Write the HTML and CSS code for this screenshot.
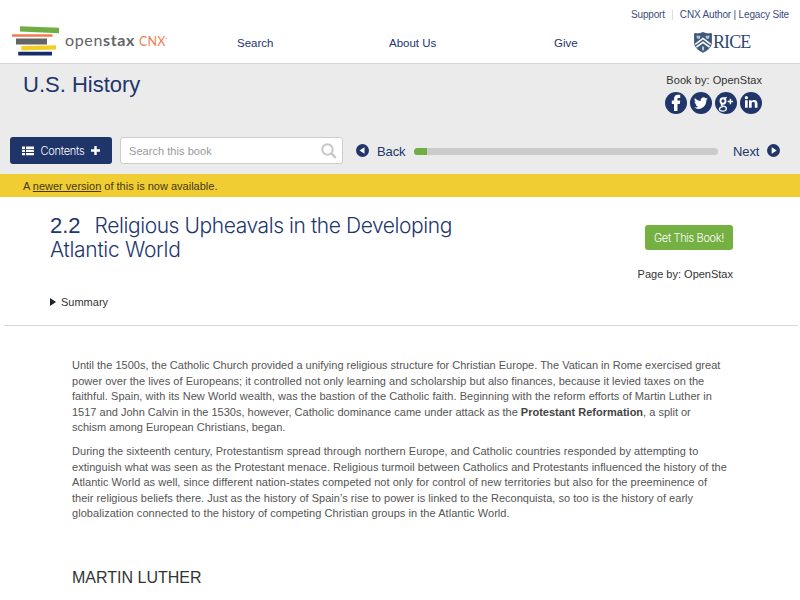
FILE: index.html
```html
<!DOCTYPE html>
<html lang="en">
<head>
<meta charset="utf-8">
<title>U.S. History - OpenStax CNX</title>
<link rel="stylesheet" href="styles.css">
</head>
<body>
<header class="site-header">
  <div class="utility"><a class="support">Support</a><i class="divider"></i><a class="author">CNX Author | Legacy Site</a></div>
  <div class="main-nav">
    <div class="logo">
      <svg width="48" height="31" viewBox="0 0 48 31"><path fill="#70ae43" d="M8 .3 47 1.800v5.500L8 5.500z"/><path fill="#ee7d51" d="M0 8.300h40.500v2.500H0z"/><path fill="#626466" d="M4 12.500h31v6H4z"/><path fill="#f3cf25" d="M9.300 20 44 19.300v4.200L9.300 24.500z"/><path fill="#162b69" d="M6.200 25.700H40v3.700H6.200z"/></svg>
      <span class="word">open<b>stax</b></span><span class="cnx">CNX<sup>·</sup></span>
    </div>
    <a class="nav-search">Search</a><a class="nav-about">About Us</a><a class="nav-give">Give</a>
    <div class="rice">
      <svg width="18" height="21" viewBox="0 0 18 21"><path fill="#3f5b7e" stroke="#2a4468" stroke-width=".8" d="M.6 1.600Q5 2.500 9 .6q4 1.900 8.400 1v8.500c0 5-3.400 8-8.400 10.200C4 18.100.6 15.100.6 10.100z"/><path fill="#b9c8d8" d="m2.500 3.500 4 .5-1 3-2.500-.5zm9 .5 4-.5-.5 3-2.500.5zM8 14.500h2v3.500L9 18.800l-1-.8z"/><path fill="none" stroke="#fff" stroke-width="1.500" d="M1.300 12.300 9 6.500l7.700 5.800M2.400 15.200 9 10.300l6.600 4.900"/></svg>
      <span>RICE</span>
    </div>
  </div>
</header>
<section class="book-bar">
  <div class="book-head">
    <h1>U.S. History</h1>
    <div class="byline">
      <div class="book-by">Book by: OpenStax</div>
      <div class="social">
        <svg viewBox="0 0 22 22"><circle cx="11" cy="11" r="11"/><path class="ink" d="M9 19v-7H6.800V8.600H9V7c0-2.700 1.500-4.200 4-4.200h2.200v3.300h-1.400c-1.100 0-1.300.5-1.300 1.300v1.200h2.700l-.4 3.400h-2.300v7z"/></svg>
        <svg viewBox="0 0 22 22"><circle cx="11" cy="11" r="11"/><path class="ink" d="M17.800 6.600c-.5.300-1 .4-1.600.5.600-.4 1-.9 1.200-1.500-.5.300-1.100.5-1.800.7A2.850 2.850 0 0 0 10.700 9C8.400 8.900 6.300 7.800 4.900 6.100c-.8 1.300-.4 2.900.9 3.800-.5 0-.9-.1-1.300-.3 0 1.400.9 2.500 2.300 2.800-.4.100-.9.100-1.300 0 .4 1.200 1.400 1.900 2.700 2-1.200.9-2.700 1.300-4.200 1.200 5.500 3.400 12.400-.1 12.400-7.500.5-.4 1-.9 1.400-1.500z"/></svg>
        <svg viewBox="0 0 22 22"><circle cx="11" cy="11" r="11"/><g fill="none" stroke="#fff"><ellipse cx="8" cy="9" rx="2.500" ry="2.700" stroke-width="1.900"/><path stroke-width="1.300" d="M9 6.200q1.500-.1 2.700-1M7.500 11.900c-2 1.100-1.300 1.700 1 2.200 4.200.9 3.600 5.100-.8 5-4.500-.1-4.200-3.600.1-4.400"/><path stroke-width="1.500" d="M12.700 9.500h5.400M15.400 6.800v5.400"/></g></svg>
        <svg viewBox="0 0 22 22"><circle cx="11" cy="11" r="11"/><path class="ink" d="M5 8.200h2.700v7.500H5zM9 8.200h2.600v1c1.500-2 5.900-1.600 5.900 2.300v4.200h-2.700v-4.200c0-2-3.100-1.800-3.100 0v4.200H9z"/><circle class="ink" cx="6.350" cy="5.700" r="1.600"/></svg>
      </div>
    </div>
  </div>
  <div class="toolbar">
    <button class="contents"><svg width="12" height="10" viewBox="0 0 12 10"><path fill="#fff" d="M0 .5h3v2.400H0zm4 0h8v2.400H4zM0 3.700h3v2.400H0zm4 0h8v2.400H4zM0 6.900h3v2.400H0zm4 0h8v2.400H4z"/></svg><span>Contents</span><svg width="9" height="9" viewBox="0 0 9 9"><path fill="#fff" d="M3.300 0h2.400v3.300H9v2.400H5.700V9H3.300V5.700H0V3.300h3.300z"/></svg></button>
    <div class="search"><span>Search this book</span><svg width="16" height="16" viewBox="0 0 16 16"><g fill="none" stroke="#c7c7c7" stroke-width="2"><circle cx="6.500" cy="6.500" r="5.200"/><path stroke-width="2.400" d="m10.500 10.500 4.300 4.300"/></g></svg></div>
    <a class="back"><svg width="13" height="13" viewBox="0 0 13 13"><circle cx="6.500" cy="6.500" r="6.500"/><path class="ink" d="M8.500 3.300v6.400L3.500 6.500z"/></svg><span>Back</span></a>
    <div class="progress"><i></i></div>
    <a class="next"><span>Next</span><svg width="13" height="13" viewBox="0 0 13 13"><circle cx="6.500" cy="6.500" r="6.500"/><path class="ink" d="M4.700 3.300v6.400l5-3.200z"/></svg></a>
  </div>
</section>
<div class="notice"><span>A <u>newer version</u> of this is now available.</span></div>
<main>
  <section class="page-head">
    <div class="title-block">
      <h2><span class="num">2.2</span><span class="t1">Religious Upheavals in the Developing</span><br><span class="t2">Atlantic World</span></h2>
      <div class="summary"><svg width="6" height="8" viewBox="0 0 6 8"><path fill="#222" d="M0 0v8l6-4z"/></svg><span>Summary</span></div>
    </div>
    <div class="page-side"><button class="get">Get This Book!</button><div class="page-by">Page by: OpenStax</div></div>
  </section>
  <article>
    <p>Until the 1500s, the Catholic Church provided a unifying religious structure for Christian Europe. The Vatican in Rome exercised great<br><span class="loose">power over the lives of Europeans; it controlled not only learning and scholarship but also finances, because it levied taxes on the</span><br><span class="looser">faithful. Spain, with its New World wealth, was the bastion of the Catholic faith. Beginning with the reform efforts of Martin Luther in</span><br>1517 and John Calvin in the 1530s, however, Catholic dominance came under attack as the <b>Protestant Reformation</b>, a split or<br>schism among European Christians, began.</p>
    <p><span class="looser">During the sixteenth century, Protestantism spread through northern Europe, and Catholic countries responded by attempting to</span><br><span class="loose">extinguish what was seen as the Protestant menace. Religious turmoil between Catholics and Protestants influenced the history of the</span><br><span class="looser">Atlantic World as well, since different nation-states competed not only for control of new territories but also for the preeminence of</span><br><span class="loose">their religious beliefs there. Just as the history of Spain’s rise to power is linked to the Reconquista, so too is the history of early</span><br><span class="looser">globalization connected to the history of competing Christian groups in the Atlantic World.</span></p>
    <h3>MARTIN LUTHER</h3>
  </article>
</main>
</body>
</html>
```
FILE: styles.css
```css
* { box-sizing: border-box; }
body { margin: 0; width: 800px; height: 600px; overflow: hidden; background: #fff; color: #333; font: 11px/16px "Liberation Sans", Arial, sans-serif; }
h1, h2, h3, p { margin: 0; font-weight: 400; }
button { border: 0; padding: 0; font: inherit; color: #fff; }
svg { display: block; flex: none; }
a, h1, h2 { color: #22366c; }
.ink { fill: #fff; }
span, a { white-space: nowrap; }

.site-header { height: 64px; border-bottom: 1px solid #d4d4d4; }
.utility { display: flex; height: 24px; padding: 6px 11px 0 0; justify-content: flex-end; align-items: center; font-size: 10px; letter-spacing: -.17px; }
.utility a { color: #3c4d7c; }
.divider { width: 1px; height: 10px; margin: 0 7px; background: #ddd; }
.main-nav { display: grid; grid-template-columns: 237px 152px 165px 140px 1fr; height: 38px; align-items: center; font-size: 11.5px; }
.main-nav a { margin-bottom: 2px; }
.logo { display: flex; align-items: center; padding-left: 12px; height: 34px; margin-bottom: 5px; font-family: Lato, sans-serif; font-size: 16px; color: #626466; }
.logo .word { margin: 0 0 2px 5px; letter-spacing: .65px; }
.logo .cnx { margin-left: 4px; padding-top: 1px; font-size: 12.5px; letter-spacing: .1px; color: #ee7d51; }
.logo sup { font-size: 7px; line-height: 0; }
.rice { display: flex; align-items: center; gap: 1px; margin-bottom: 2px; font: 18px/21px "Liberation Serif", serif; color: #31486f; letter-spacing: -.9px; }

.book-bar { height: 110px; background: #ebebeb; }
.book-head { display: flex; height: 73px; padding: 8px 38px 0 23px; justify-content: space-between; }
h1 { font-size: 22px; line-height: 26px; }
.byline { text-align: right; }
.book-by { line-height: 17px; font-size: 11px; letter-spacing: .05px; }
.social { display: flex; gap: 3px; margin-top: 3px; justify-content: flex-end; }
.social svg { width: 22px; height: 22px; fill: #203569; }
.toolbar { display: flex; height: 27px; padding-left: 10px; align-items: center; }
.contents { display: flex; width: 102px; height: 27px; padding: 0 12px; align-items: center; justify-content: space-between; background: #1f3469; border-radius: 3px; font: 300 11px/16px Inter, sans-serif; letter-spacing: -.25px; }
.search { display: flex; width: 223px; height: 27px; margin-left: 8px; padding: 0 5px 0 8px; align-items: center; justify-content: space-between; border: 1px solid #ccc; border-radius: 3px; background: #fff; color: #999; letter-spacing: .05px; }
.back, .next { display: flex; align-items: center; gap: 8px; font-size: 13px; letter-spacing: -.1px; fill: #203569; }
.back span, .next span { padding-top: 2px; }
.back { width: 58px; margin-left: 13px; }
.progress { width: 304px; height: 7px; margin-top: 1px; border-radius: 4px; overflow: hidden; background: #cbcbcb; }
.progress i { display: block; width: 13px; height: 7px; background: #70ae43; }
.next { margin-left: 15px; }

.notice { height: 23px; padding-left: 23px; background: #f0cd33; line-height: 24px; color: #443a16; }
main { padding: 0 2px 0 4px; }
.page-head { display: flex; height: 129px; padding: 17px 65px 0 46px; justify-content: space-between; border-bottom: 1px solid #d8d8d8; }
h2 { font: 300 21px/23.500px Inter, sans-serif; letter-spacing: -.42px; }
.t2 { letter-spacing: -.3px; }
.num { margin-right: 14px; font-family: "Liberation Sans", sans-serif; font-size: 22px; letter-spacing: 0; }
.summary { display: flex; margin-top: 33px; gap: 5px; align-items: center; }
.page-side { display: flex; flex-direction: column; align-items: flex-end; padding-top: 11px; }
.get { width: 88px; height: 25px; border-radius: 3px; background: #75b043; font: 300 11px/16px Inter, sans-serif; letter-spacing: -.35px; }
.page-by { margin-top: 16px; }
article { padding: 32px 0 0 68px; color: #555; line-height: 15.600px; }
article p { margin-bottom: 8px; white-space: nowrap; }
article b { color: #444; }
.loose { letter-spacing: .023px; }
.looser { letter-spacing: .047px; }
h3 { margin-top: 45px; font-size: 16px; line-height: 22px; color: #333; }
```
